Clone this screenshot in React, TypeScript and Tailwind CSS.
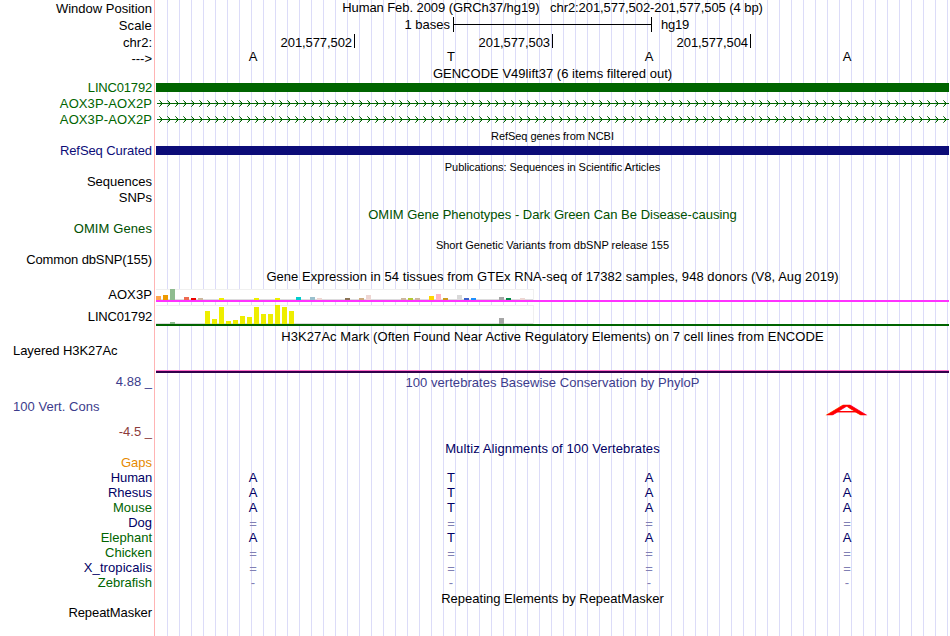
const labels: { text: string; cls: string }[] = [
  { text: 'Window Position', cls: 'h-[17px]' },
  { text: 'Scale', cls: 'h-[17px] tracking-[0.15px]' },
  { text: 'chr2:', cls: 'h-[15px]' },
  { text: '--->', cls: 'h-[30px] pt-px' },
  { text: 'LINC01792', cls: 'h-4 tracking-[-0.18px] text-[#006400]' },
  { text: 'AOX3P-AOX2P', cls: 'h-4 tracking-[0.1px] text-[#006400]' },
  { text: 'AOX3P-AOX2P', cls: 'h-[31px] tracking-[0.1px] text-[#006400]' },
  { text: 'RefSeq Curated', cls: 'h-[31px] tracking-[-0.08px] text-[#0c0c78]' },
  { text: 'Sequences', cls: 'h-4' },
  { text: 'SNPs', cls: 'h-[31px]' },
  { text: 'OMIM Genes', cls: 'h-[31px] tracking-[0.1px] text-[#005000]' },
  { text: 'Common dbSNP(155)', cls: 'h-[35px] tracking-[-0.12px]' },
  { text: 'AOX3P', cls: 'h-[22px] tracking-[0.1px]' },
  { text: 'LINC01792', cls: 'h-[34px] tracking-[-0.18px]' },
  { text: 'Layered H3K27Ac', cls: 'h-[31px] self-start pl-[13px] tracking-[-0.07px]' },
  { text: '4.88 _', cls: 'h-[25px] text-[#3c3c8c]' },
  { text: '100 Vert. Cons', cls: 'h-[25px] self-start pl-[13px] tracking-[0.04px] text-[#3c3c8c]' },
  { text: '-4.5 _', cls: 'h-[31px] text-[#8c3c3c]' },
  { text: 'Gaps', cls: 'h-[15px] text-[#e68a00]' },
  { text: 'Human', cls: 'h-[15px] tracking-[-0.15px] text-[#000064]' },
  { text: 'Rhesus', cls: 'h-[15px] text-[#000064]' },
  { text: 'Mouse', cls: 'h-[15px] text-[#006400]' },
  { text: 'Dog', cls: 'h-[15px] text-[#000064]' },
  { text: 'Elephant', cls: 'h-[15px] text-[#006400]' },
  { text: 'Chicken', cls: 'h-[15px] text-[#006400]' },
  { text: 'X_tropicalis', cls: 'h-[15px] tracking-[0.08px] text-[#000064]' },
  { text: 'Zebrafish', cls: 'h-[30px] text-[#006400]' },
  { text: 'RepeatMasker', cls: 'h-[15px] tracking-[-0.08px]' },
];

type Bars = Record<number, [number, string]>;

const aox3p: Bars = {
  0: [3, '#ffa54f'], 1: [4, '#ee9a00'], 2: [10, '#8fbc8f'], 4: [2, '#ee6a50'], 5: [1, '#ee0000'],
  6: [1, '#cdb79e'], 9: [1, '#eeee00'], 14: [1, '#eeee00'], 17: [1, '#eeee00'], 20: [2, '#00cdcd'],
  22: [2, '#9ac0cd'], 23: [1, '#eed5d2'], 27: [1, '#8b7355'], 29: [1, '#cdaa7d'], 30: [4, '#eed5d2'],
  35: [1, '#cdb79e'], 36: [1, '#b4c832'], 37: [1, '#cdb79e'], 39: [3, '#ffd700'], 40: [5, '#ffb6c1'],
  41: [1, '#cd9b1d'], 43: [4, '#d9d9d9'], 44: [1, '#3a5fcd'], 45: [1, '#1e90ff'], 49: [2, '#a6a6a6'],
  50: [1, '#008b45'], 52: [1, '#eed5d2'],
};

const linc: Bars = {
  2: [1, '#8fbc8f'], 7: [12, '#eeee00'], 8: [4, '#eeee00'], 9: [16, '#eeee00'], 10: [2, '#eeee00'],
  11: [3, '#eeee00'], 12: [7, '#eeee00'], 13: [6, '#eeee00'], 14: [16, '#eeee00'], 15: [9, '#eeee00'],
  16: [9, '#eeee00'], 17: [18, '#eeee00'], 18: [16, '#eeee00'], 19: [12, '#eeee00'], 49: [5, '#a6a6a6'],
};

function Expression({ bars, cls }: { bars: Bars; cls: string }) {
  return (
    <div className={`flex w-[378px] items-end gap-[2px] border-t border-r border-[#f0f0f0] bg-white bg-[linear-gradient(#dcdcdc,#dcdcdc)] bg-[length:100%_1px] bg-bottom bg-no-repeat ${cls}`}>
      {Array.from({ length: 54 }, (_, i) => (
        <div
          key={i}
          className="w-[5px] shrink-0"
          style={{ height: bars[i]?.[0] ? bars[i][0] + 1 : 0, background: bars[i]?.[1] }}
        />
      ))}
    </div>
  );
}

function Arrows() {
  return (
    <svg className="block h-4 w-[793px]" viewBox="0 0 793 16" shapeRendering="crispEdges">
      <rect x="1" y="11" width="792" height="1" fill="#006400" transform="translate(0 -4)" />
      {Array.from({ length: 99 }, (_, i) => (
        <g key={i} transform={`translate(${i * 8 + 3} 4)`} fill="#006400">
          <rect x="0" y="0" width="1" height="1" opacity="0.7" />
          <rect x="1" y="1" width="1" height="1" />
          <rect x="2" y="2" width="1" height="1" />
          <rect x="3" y="3" width="1" height="1" />
          <rect x="2" y="4" width="1" height="1" />
          <rect x="1" y="5" width="1" height="1" />
          <rect x="0" y="6" width="1" height="1" opacity="0.7" />
          <rect x="1" y="2" width="1" height="1" opacity="0.3" />
          <rect x="1" y="4" width="1" height="1" opacity="0.3" />
        </g>
      ))}
    </svg>
  );
}

function Title({ text, cls }: { text: string; cls: string }) {
  return <div className={`shrink-0 text-center whitespace-pre ${cls}`}>{text}</div>;
}

function Bases({ letters, cls }: { letters: string; cls: string }) {
  return (
    <div className={`-ml-[2px] grid w-[793px] shrink-0 grid-cols-[198px_198px_198px_198px] text-center ${cls}`}>
      {letters.split('').map((c, i) => (
        <span key={i}>{c}</span>
      ))}
    </div>
  );
}

export default function App() {
  return (
    <div className="flex h-[636px] w-[950px] overflow-hidden bg-white font-['Liberation_Sans',Arial,sans-serif] text-[13px] leading-[15px] text-black">
      <div className="flex w-[154px] shrink-0 flex-col items-end pt-px">
        {labels.map((l, i) => (
          <div key={i} className={`shrink-0 pr-[2px] whitespace-pre ${l.cls}`}>{l.text}</div>
        ))}
      </div>
      <div className="mr-px w-px shrink-0 bg-[#ffb4b4]" />
      <div className="flex w-[793px] shrink-0 flex-col bg-[linear-gradient(to_right,transparent_11px,#dcdcf8_11px)] bg-[length:12px_100%]">
        <Title text="Human Feb. 2009 (GRCh37/hg19)   chr2:201,577,502-201,577,505 (4 bp)" cls="h-[17px] tracking-[-0.075px]" />
        <div className="flex h-[17px] shrink-0">
          <div className="w-[297px] pr-[3px] text-right">1 bases</div>
          <div className="flex h-[15px] w-[199px] items-center border-x border-black">
            <div className="h-px w-full bg-black" />
          </div>
          <div className="pl-[9px] tracking-[-0.2px]">hg19</div>
        </div>
        <div className="ml-px flex h-[15px] shrink-0">
          {['201,577,502', '201,577,503', '201,577,504'].map((p) => (
            <div key={p} className="h-[14px] w-[198px] border-r border-black pt-px pr-[2px] text-right tracking-[-0.08px]">{p}</div>
          ))}
        </div>
        <Bases letters="ATAA" cls="h-[17px]" />
        <Title text="GENCODE V49lift37 (6 items filtered out)" cls="h-[17px] tracking-[0.02px]" />
        <div className="mb-1 h-[9px] shrink-0 bg-[#006400]" />
        <Arrows />
        <Arrows />
        <Title text="RefSeq genes from NCBI" cls="mt-[2px] h-4 text-[11px] leading-[13px] tracking-[-0.06px]" />
        <div className="mb-[6px] h-[9px] shrink-0 bg-[#0c0c78]" />
        <Title text="Publications: Sequences in Scientific Articles" cls="h-[46px] text-[11px] leading-[13px] tracking-[-0.05px]" />
        <Title text="OMIM Gene Phenotypes - Dark Green Can Be Disease-causing" cls="h-8 text-[#005000]" />
        <Title text="Short Genetic Variants from dbSNP release 155" cls="h-[30px] text-[11px] leading-[13px]" />
        <Title text="Gene Expression in 54 tissues from GTEx RNA-seq of 17382 samples, 948 donors (V8, Aug 2019)" cls="h-5 tracking-[0.055px]" />
        <Expression bars={aox3p} cls="h-[11px]" />
        <div className="mb-[3px] h-[2px] shrink-0 bg-[#ff32ff]" />
        <Expression bars={linc} cls="h-[19px]" />
        <div className="mb-[3px] h-[2px] shrink-0 bg-[#006400]" />
        <Title text="H3K27Ac Mark (Often Found Near Active Regulatory Elements) on 7 cell lines from ENCODE" cls="h-[41px] tracking-[0.055px]" />
        <div className="mb-[2px] h-[3px] shrink-0 border-t border-[#ff6ec8] bg-[#32004b]" />
        <Title text="100 vertebrates Basewise Conservation by PhyloP" cls="h-[28px] tracking-[0.04px] text-[#3c3c8c]" />
        <div className="flex h-[38px] shrink-0 pl-[670px]">
          <div className="h-[15px] w-[42px] text-center text-[14px] text-[#ff0000]">
            <span className="inline-block origin-center scale-x-[4.3] [-webkit-text-stroke:0.3px_#ff0000]">A</span>
          </div>
        </div>
        <Title text="Multiz Alignments of 100 Vertebrates" cls="h-[29px] tracking-[0.1px] text-[#000064]" />
        <Bases letters="ATAA" cls="h-[15px] text-[#000064]" />
        <Bases letters="ATAA" cls="h-[15px] text-[#000064]" />
        <Bases letters="ATAA" cls="h-[15px] text-[#000064]" />
        <Bases letters="====" cls="h-[15px] pt-px text-[#8080b4]" />
        <Bases letters="ATAA" cls="h-[15px] text-[#000064]" />
        <Bases letters="====" cls="h-[15px] pt-px text-[#8080b4]" />
        <Bases letters="====" cls="h-[15px] pt-px text-[#8080b4]" />
        <Bases letters="----" cls="h-4 text-[#8080b4]" />
        <Title text="Repeating Elements by RepeatMasker" cls="h-[15px]" />
      </div>
    </div>
  );
}
